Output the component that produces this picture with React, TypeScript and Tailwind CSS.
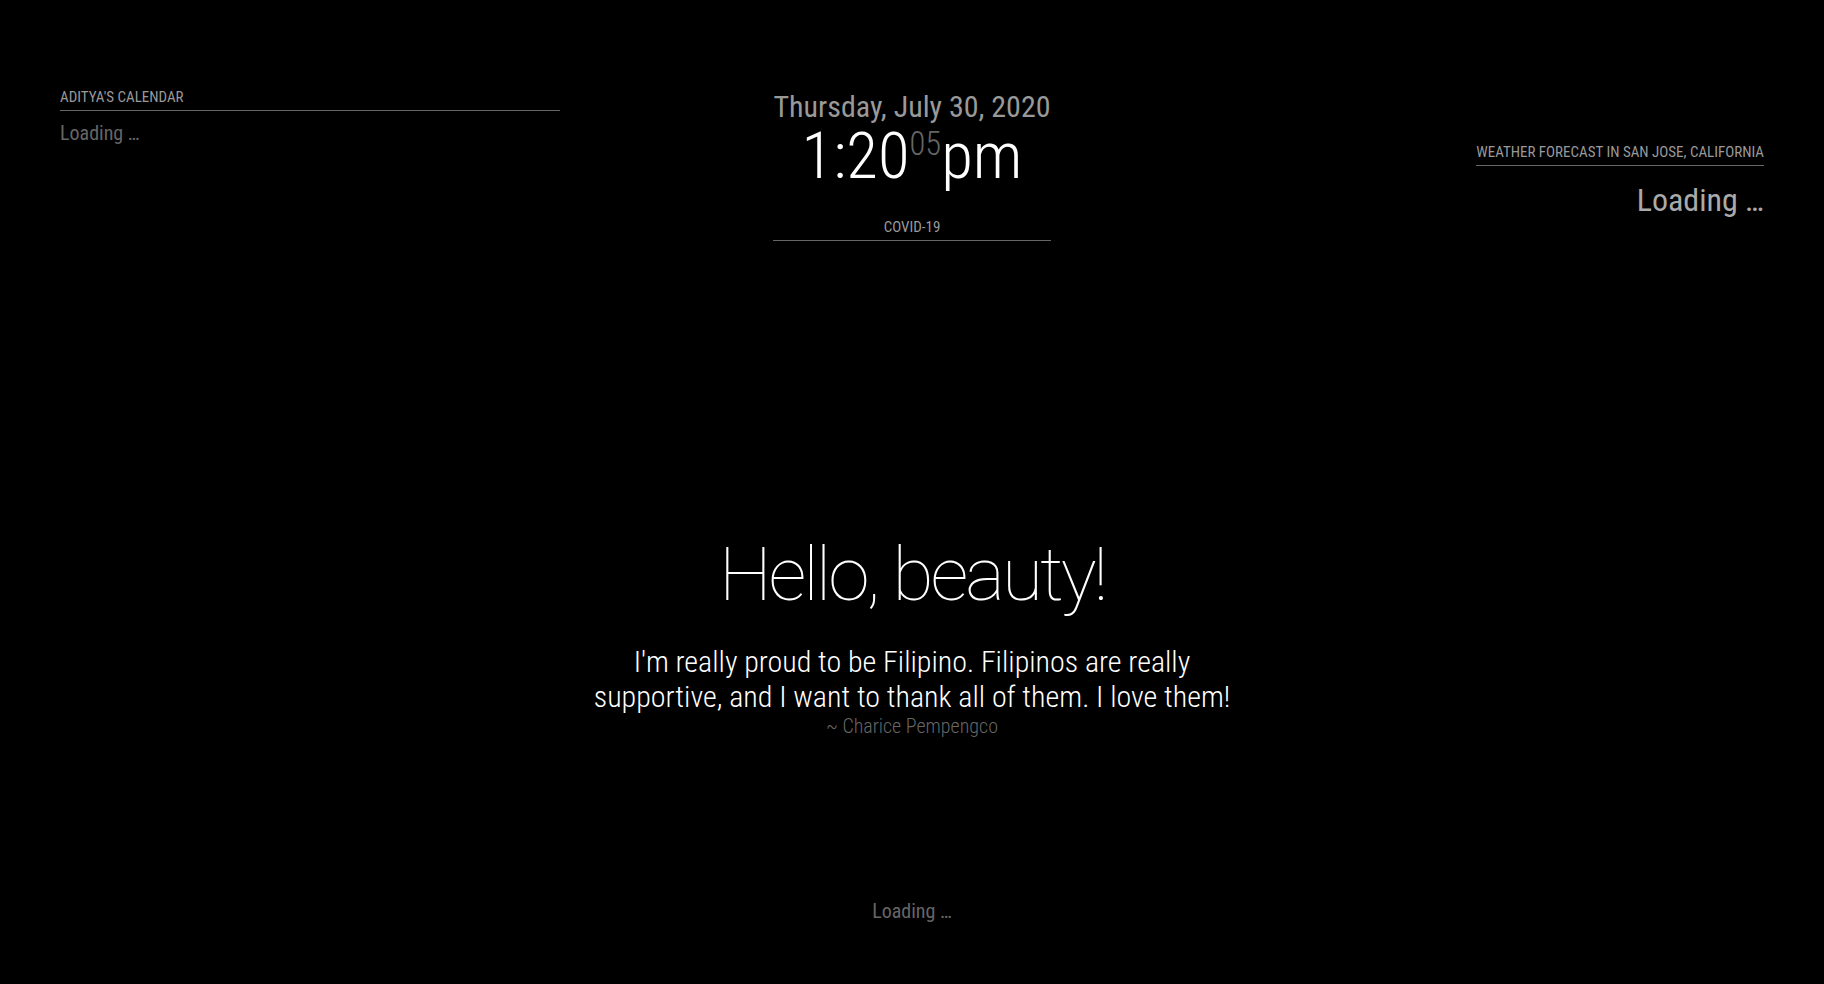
import React from 'react';

const cond = { fontFamily: '"Roboto Condensed", Roboto, "Liberation Sans", sans-serif' };

const Header: React.FC<{ title: string; align?: string }> = ({ title, align = 'text-left' }) => (
  <div className={`${align} text-[15px] leading-[15px] uppercase text-[#999] pb-[5px] border-b border-[#666]`}>{title}</div>
);

export default function App() {
  return (
    <div className="h-[984px] w-full bg-black overflow-hidden p-[60px] flex flex-col" style={cond}>
      {/* top bar */}
      <div className="grid grid-cols-[1fr_auto_1fr] items-start">
        <div className="pt-[30px]">
          <div className="w-[500px]">
            <Header title="Aditya's Calendar" />
            <div className="mt-[12px] text-[20px] leading-[20px] text-[#666]">Loading …</div>
          </div>
        </div>

        <div className="pt-[32px] w-[278px] text-center">
          <div className="text-[30px] leading-[30px] text-[#999]">Thursday, July 30, 2020</div>
          <div className="mt-[2px] text-[65px] leading-[65px] font-light text-white">
            1:20<span className="text-[32.5px] leading-[32px] text-[#666] align-[23px]">05</span>pm
          </div>
          <div className="mt-[31px]">
            <Header title="Covid-19" align="text-center" />
          </div>
        </div>

        <div className="pt-[85px] flex justify-end">
          <div className="w-[288px]">
            <Header title="Weather Forecast In San Jose, California" align="text-right" />
            <div className="mt-[18px] text-right text-[32px] leading-[32px] text-[#aaa]">Loading …</div>
          </div>
        </div>
      </div>

      {/* middle */}
      <div className="mt-[296px] text-center">
        <div className="text-[75px] leading-[75px] tracking-[-3px] font-thin text-white" style={{ fontFamily: 'Roboto, sans-serif' }}>
          Hello, beauty!
        </div>
        <div className="mt-[32px] text-[30px] leading-[35px] font-light text-white">
          I'm really proud to be Filipino. Filipinos are really
          <br />
          supportive, and I want to thank all of them. I love them!
        </div>
        <div className="mt-[2px] text-[20px] leading-[20px] font-light text-[#666]">~ Charice Pempengco</div>
      </div>

      {/* bottom */}
      <div className="mt-auto mb-[3px] text-center text-[20px] leading-[20px] text-[#666]">Loading …</div>
    </div>
  );
}
